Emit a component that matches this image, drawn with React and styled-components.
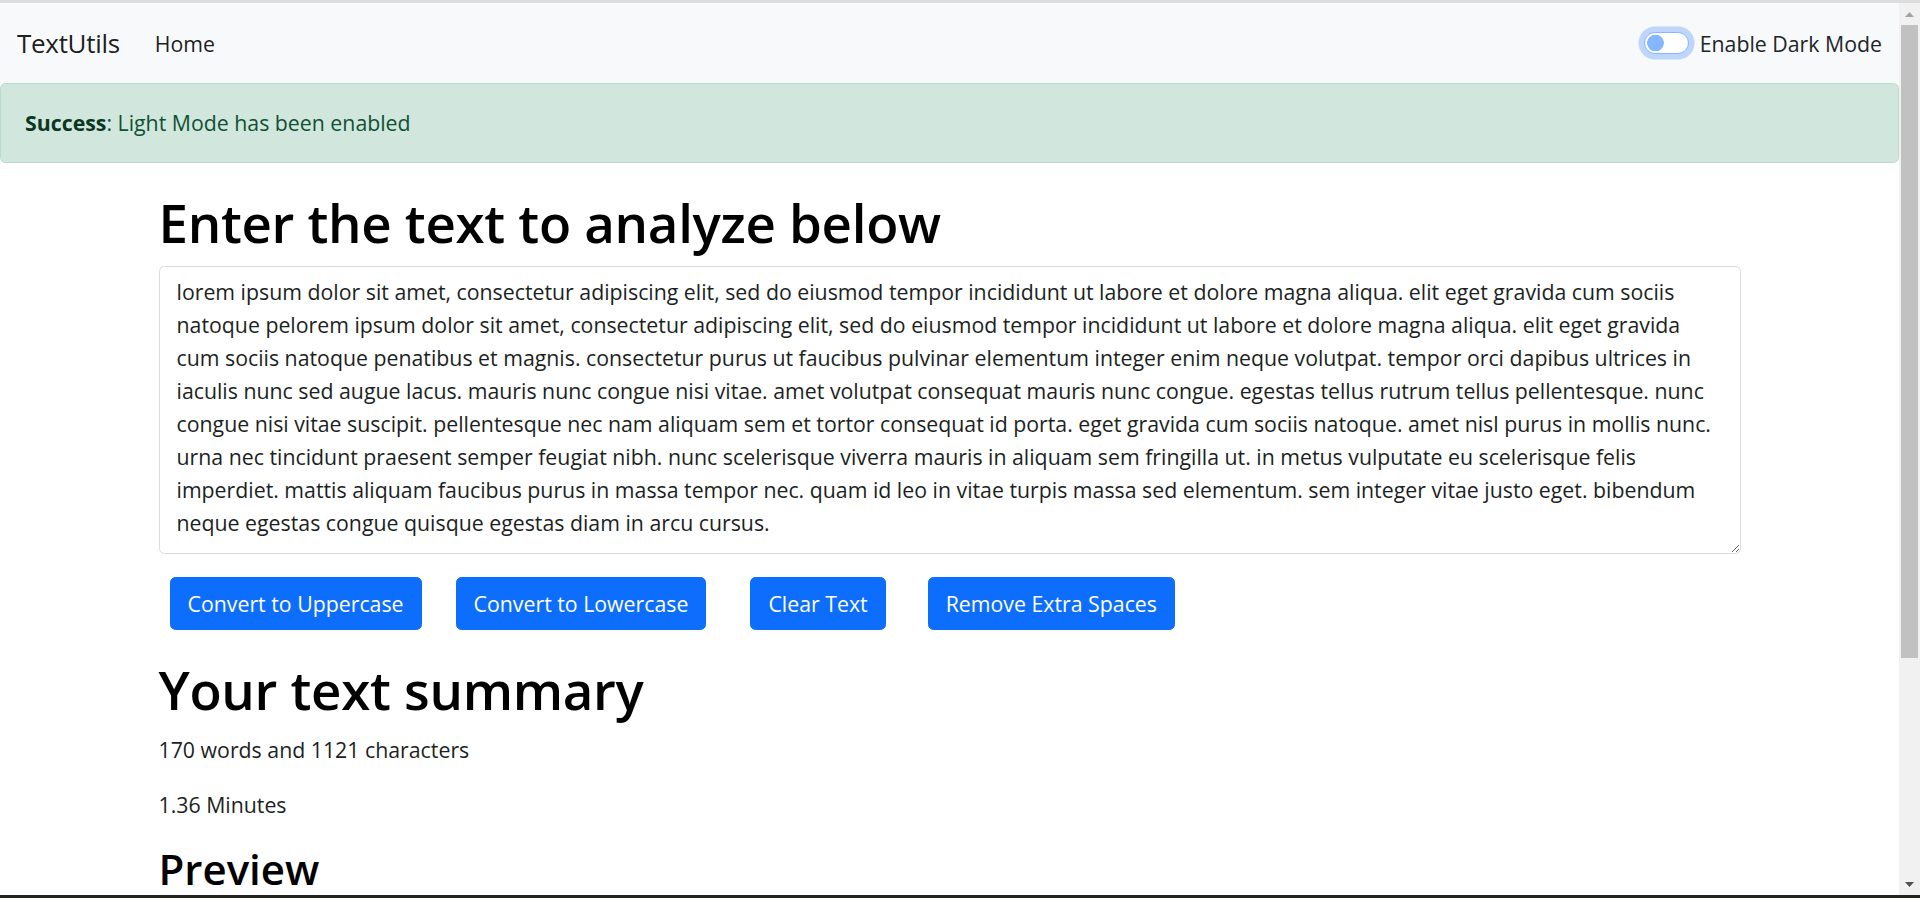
import React, { useState } from "react";
import styled, { createGlobalStyle } from "styled-components";

const sample = [
  "lorem ipsum dolor sit amet, consectetur adipiscing elit, sed do eiusmod tempor incididunt ut labore et dolore magna aliqua. elit eget gravida cum sociis",
  "natoque pelorem ipsum dolor sit amet, consectetur adipiscing elit, sed do eiusmod tempor incididunt ut labore et dolore magna aliqua. elit eget gravida",
  "cum sociis natoque penatibus et magnis. consectetur purus ut faucibus pulvinar elementum integer enim neque volutpat. tempor orci dapibus ultrices in",
  "iaculis nunc sed augue lacus. mauris nunc congue nisi vitae. amet volutpat consequat mauris nunc congue. egestas tellus rutrum tellus pellentesque. nunc",
  "congue nisi vitae suscipit. pellentesque nec nam aliquam sem et tortor consequat id porta. eget gravida cum sociis natoque. amet nisl purus in mollis nunc.",
  "urna nec tincidunt praesent semper feugiat nibh. nunc scelerisque viverra mauris in aliquam sem fringilla ut. in metus vulputate eu scelerisque felis",
  "imperdiet. mattis aliquam faucibus purus in massa tempor nec. quam id leo in vitae turpis massa sed elementum. sem integer vitae justo eget. bibendum",
  "neque egestas congue quisque egestas diam in arcu cursus.",
].join("\n");

const actions = [
  { label: "Convert to Uppercase", gap: 11 },
  { label: "Convert to Lowercase", gap: 34 },
  { label: "Clear Text", gap: 44 },
  { label: "Remove Extra Spaces", gap: 42 },
];

function App() {
  const [text, setText] = useState(sample);

  return (
    <>
      <GlobalStyle />
      <Screen>
        <Edge />
        <Body>
          <Page>
            <Navbar>
              <Brand>TextUtils</Brand>
              <NavLink>Home</NavLink>
              <ModeToggle>
                <Switch type="checkbox" role="switch" />
                <span>Enable Dark Mode</span>
              </ModeToggle>
            </Navbar>

            <Alert>
              <strong>Success</strong>: Light Mode has been enabled
            </Alert>

            <Container>
              <Heading>Enter the text to analyze below</Heading>
              <TextBox rows={8} value={text} onChange={(e) => setText(e.target.value)} />
              <Actions>
                {actions.map((a) => (
                  <Button key={a.label} $gap={a.gap}>
                    {a.label}
                  </Button>
                ))}
              </Actions>
            </Container>

            <Container>
              <Heading>Your text summary</Heading>
              <Para>170 words and 1121 characters</Para>
              <Para>1.36 Minutes</Para>
              <SubHeading>Preview</SubHeading>
              <Para>{text}</Para>
            </Container>
          </Page>

          <ScrollBar>
            <ScrollButton>
              <svg width="9" height="5" viewBox="0 0 9 5">
                <polygon points="0,5 4.5,0 9,5" fill="#a3a3a3" />
              </svg>
            </ScrollButton>
            <Thumb />
            <ScrollButton>
              <svg width="9" height="5" viewBox="0 0 9 5">
                <polygon points="0,0 9,0 4.5,5" fill="#505050" />
              </svg>
            </ScrollButton>
          </ScrollBar>
        </Body>
        <Edge $dark />
      </Screen>
    </>
  );
}

const GlobalStyle = createGlobalStyle`
  *, *::before, *::after {
    box-sizing: border-box;
  }
  html, body {
    margin: 0;
    height: 100%;
    overflow: hidden;
  }
  body {
    font-family: "Open Sans", "Noto Sans", sans-serif;
    font-size: 21.3px;
    line-height: 33px;
    color: #1c1f23;
    background: #fff;
  }
`;

const Screen = styled.div`
  height: 100vh;
  display: flex;
  flex-direction: column;
`;

const Edge = styled.div`
  height: 3px;
  flex-shrink: 0;
  background: ${(p) => (p.$dark ? "#24231f" : "#dcdcdc")};
`;

const Body = styled.div`
  flex: 1;
  min-height: 0;
  display: flex;
`;

const Page = styled.main`
  flex: 1;
  min-width: 0;
  overflow: hidden;
  background: #fff;
`;

const Navbar = styled.nav`
  height: 80px;
  display: flex;
  align-items: center;
  padding: 0 17px;
  background: #f8f9fa;
`;

const Brand = styled.a`
  font-size: 26px;
  letter-spacing: -0.3px;
  color: rgba(0, 0, 0, 0.9);
  margin-right: 24px;
  line-height: 40px;
`;

const NavLink = styled.a`
  padding: 0 11px;
  color: rgba(0, 0, 0, 0.9);
`;

const ModeToggle = styled.label`
  margin-left: auto;
  display: flex;
  align-items: center;
  gap: 11px;
  color: #212529;
`;

const Switch = styled.input`
  appearance: none;
  margin: 0;
  width: 45px;
  height: 22px;
  border: 1px solid #86b7fe;
  border-radius: 11px;
  background: radial-gradient(circle at 10.5px 50%, #86b7fe 8px, transparent 8.6px) #fff;
  box-shadow: 0 0 0 5.5px rgba(13, 110, 253, 0.25);
  outline: none;
`;

const Alert = styled.div`
  padding: 22px 24px 23px;
  background: #d1e7dd;
  border: 1px solid #badbcc;
  border-radius: 5.5px;
  color: #0f5132;
  strong {
    font-weight: 700;
    color: #0a3622;
  }
`;

const Container = styled.section`
  width: 1582px;
  margin: 0 auto;
  padding-top: 27px;
`;

const Heading = styled.h1`
  margin: 0 0 10px;
  font-size: 52.8px;
  line-height: 66px;
  font-weight: 600;
  letter-spacing: -0.3px;
  color: #000;
`;

const SubHeading = styled.h2`
  margin: 2px 0 10px;
  font-size: 42px;
  line-height: 51.6px;
  font-weight: 600;
  color: #000;
`;

const TextBox = styled.textarea`
  display: block;
  width: 100%;
  height: 288px;
  padding: 8px 17px 5px;
  font: inherit;
  color: #1c1f23;
  background: #fff;
  border: 1px solid #d8dbe0;
  border-radius: 5.5px;
  resize: vertical;
  outline: none;
`;

const Actions = styled.div`
  display: flex;
  margin-top: 23px;
`;

const Button = styled.button`
  margin-left: ${(p) => p.$gap}px;
  padding: 9px 17px;
  font: inherit;
  color: #fff;
  background: #0d6efd;
  border: 1px solid #0d6efd;
  border-radius: 5.5px;
  cursor: pointer;
`;

const Para = styled.p`
  margin: 0 0 22px;
  white-space: pre-line;
`;

const ScrollBar = styled.div`
  width: 21px;
  flex-shrink: 0;
  display: flex;
  flex-direction: column;
  background: #f1f1f1;
`;

const ScrollButton = styled.div`
  height: 22px;
  display: flex;
  align-items: center;
  justify-content: center;
  &:last-child {
    margin-top: auto;
  }
`;

const Thumb = styled.div`
  height: 633px;
  margin: 0 2px;
  background: #c1c1c1;
`;

export default App;
